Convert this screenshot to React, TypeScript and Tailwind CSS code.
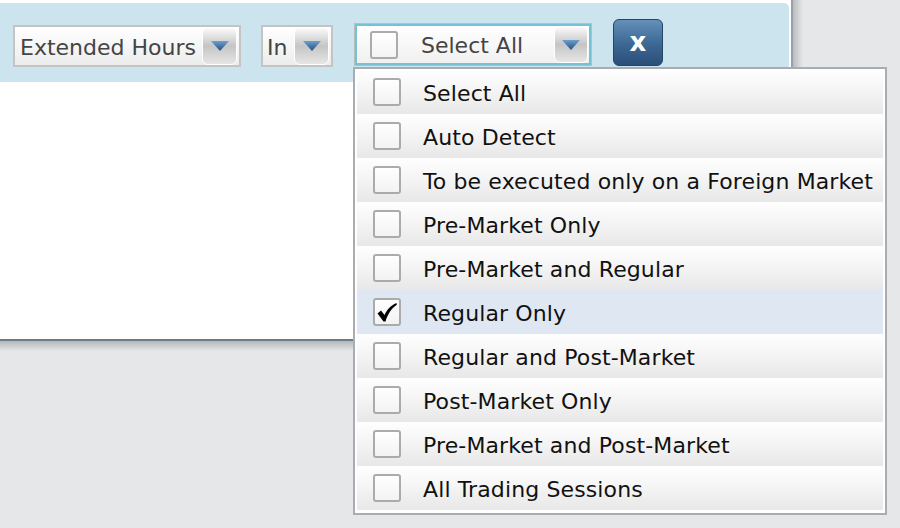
import React from "react";

function Arrow({ w = 35, h = 38 }: { w?: number; h?: number }) {
  return (
    <div
      className="rounded-[6px] border border-white bg-gradient-to-b from-[#fbfbfb] via-[#c5c5c5] to-[#e6e6e6] flex items-center justify-center shrink-0"
      style={{ width: w, height: h }}
    >
      <svg width="18" height="10" viewBox="0 0 18 10">
        <defs>
          <linearGradient id="tri" x1="0" y1="0" x2="0" y2="1">
            <stop offset="0" stopColor="#6d9fd0" />
            <stop offset="1" stopColor="#24507e" />
          </linearGradient>
        </defs>
        <polygon points="0,0 18,0 9,10" fill="url(#tri)" />
      </svg>
    </div>
  );
}

function Check({ checked = false }: { checked?: boolean }) {
  return (
    <div className="w-[28px] h-[28px] shrink-0 rounded-[3px] border-2 border-[#ababab] bg-gradient-to-b from-white to-[#f3f3f3] flex items-center justify-center">
      {checked && (
        <svg width="20" height="19" viewBox="0 0 20 19">
          <path
            d="M0.5 10.5 L4 7.5 L7.5 12 C10 6.5 13.5 2.5 19.5 0 L19.8 1.8 C14.5 5.5 11 10.5 8.5 18.5 L6.5 18.5 Z"
            fill="#000"
          />
        </svg>
      )}
    </div>
  );
}

const items = [
  "Select All",
  "Auto Detect",
  "To be executed only on a Foreign Market",
  "Pre-Market Only",
  "Pre-Market and Regular",
  "Regular Only",
  "Regular and Post-Market",
  "Post-Market Only",
  "Pre-Market and Post-Market",
  "All Trading Sessions",
];

export default function App() {
  return (
    <div className="w-[900px] h-[528px] bg-[#e6e7e9] relative overflow-hidden font-['DejaVu_Sans',sans-serif] text-[22px]">
      <div className="flex flex-col w-[803px]">
        <div className="flex">
          <div className="w-[791px] h-[339px] bg-white pt-[3px]">
            <div className="w-[789px] h-[79px] bg-[#cce4ee] rounded-tr-[5px] flex items-start pl-[13px] text-[#444]">
              <div className="mt-[22px] w-[228px] h-[42px] border-2 border-[#c4c4c4] bg-gradient-to-b from-white to-[#ececec] flex items-center justify-between pl-[5px] pr-[2px]">
                <span className="leading-none mt-[4px]">Extended Hours</span>
                <Arrow />
              </div>
              <div className="mt-[22px] ml-[20px] w-[72px] h-[42px] border-2 border-[#c4c4c4] bg-gradient-to-b from-white to-[#ececec] flex items-center justify-between pl-[4px] pr-[2px]">
                <span className="leading-none mt-[4px]">In</span>
                <Arrow w={35} />
              </div>
              <div className="mt-[20px] ml-[21px] w-[238px] h-[43px] border border-[#bcbcbc] bg-[#bcbcbc]">
                <div className="w-full h-full border-2 border-[#74c2d4] bg-gradient-to-b from-white to-[#f0f0f0] flex items-center pl-[13px] pr-[1px]">
                  <Check />
                  <span className="ml-[23px] leading-none mt-[3px]">Select All</span>
                  <div className="ml-auto">
                    <Arrow w={34} h={37} />
                  </div>
                </div>
              </div>
              <div className="mt-[16px] ml-[21px] w-[50px] h-[47px] rounded-[6px] border border-[#23456a] bg-gradient-to-b from-[#6490bb] via-[#3e6a96] to-[#2a4f78] flex items-center justify-center text-white font-bold text-[26px] leading-none pb-[2px]">
                x
              </div>
            </div>
          </div>
          <div className="w-[2px] h-[339px] bg-[#97a1ab]" />
          <div className="w-[10px] h-[339px] bg-gradient-to-r from-[#b9bbbe] to-[#e6e7e9]" />
        </div>
        <div className="h-[2px] w-[793px] bg-[#6b7b87]" />
        <div className="h-[10px] w-[793px] bg-gradient-to-b from-[#b5b6b8] to-[#e6e7e9]" />
      </div>

      <div className="absolute left-[353px] top-[67px] w-[534px] h-[448px] bg-white border-2 border-[#a9adb2] px-[2px] pt-[1px] flex flex-col">
        {items.map((t, i) => (
          <div
            key={t}
            className={
              i === 5
                ? "h-[44px] shrink-0 flex items-center pl-[16px] bg-[#dfe8f2] text-[#111]"
                : "h-[44px] shrink-0 flex items-center pl-[16px] bg-gradient-to-b from-white to-[#e8e8e8] text-[#111]"
            }
          >
            <Check checked={i === 5} />
            <span className="ml-[22px] mt-[4px] leading-none whitespace-nowrap tracking-[0.12px]">{t}</span>
          </div>
        ))}
      </div>
    </div>
  );
}
